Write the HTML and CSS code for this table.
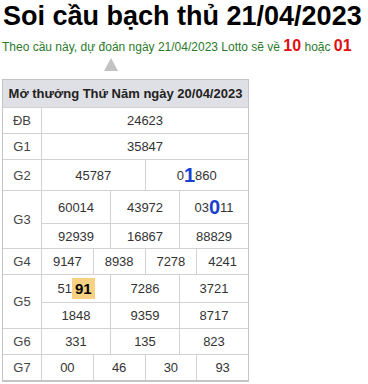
FILE: index.html
```html
<!DOCTYPE html>
<html lang="vi">
<head>
    <meta charset="UTF-8">
    <meta name="viewport" content="width=device-width, initial-scale=1.0">
    <title>Soi cầu bạch thủ 21/04/2023</title>
    <link rel="stylesheet" href="styles.css">
</head>
<body>
    <h1 class="title">Soi cầu bạch thủ 21/04/2023</h1>
    <p class="predict">Theo cầu này, dự đoán ngày 21/04/2023 Lotto sẽ về <b>10</b> hoặc <b>01</b></p>
    <div class="arrow"></div>

    <!-- Bảng kết quả -->
    <div class="result">
        <div class="head">Mở thưởng Thứ Năm ngày 20/04/2023</div>

        <div class="label">ĐB</div>
        <div class="c12">24623</div>

        <div class="label">G1</div>
        <div class="c12">35847</div>

        <div class="label">G2</div>
        <div class="c6">45787</div>
        <div class="c6">0<span class="hit">1</span>860</div>

        <div class="label r2">G3</div>
        <div class="c4">60014</div>
        <div class="c4">43972</div>
        <div class="c4">03<span class="hit">0</span>11</div>
        <div class="c4">92939</div>
        <div class="c4">16867</div>
        <div class="c4">88829</div>

        <div class="label">G4</div>
        <div class="c3">9147</div>
        <div class="c3">8938</div>
        <div class="c3">7278</div>
        <div class="c3">4241</div>

        <div class="label r2">G5</div>
        <div class="c4">51<span class="lotto">91</span></div>
        <div class="c4">7286</div>
        <div class="c4">3721</div>
        <div class="c4">1848</div>
        <div class="c4">9359</div>
        <div class="c4">8717</div>

        <div class="label">G6</div>
        <div class="c4">331</div>
        <div class="c4">135</div>
        <div class="c4">823</div>

        <div class="label">G7</div>
        <div class="c3">00</div>
        <div class="c3">46</div>
        <div class="c3">30</div>
        <div class="c3">93</div>
    </div>
</body>
</html>
```

FILE: styles.css
```css
/* General */
body {
    margin: 0;
    padding: 0 2px;
    font-family: 'Liberation Sans', Arial, sans-serif;
    color: #333;
    background: #fff;
}

.title {
    margin: 0;
    padding-left: 1px;
    font-size: 27px;
    line-height: 32px;
    font-weight: bold;
    white-space: nowrap;
    color: #000;
}

.predict {
    margin: 5px 0 0;
    font-size: 12px;
    line-height: 17px;
    white-space: nowrap;
    color: #2b7a2b;
}

.predict b {
    font-size: 16px;
    color: #e01010;
}

.arrow {
    width: 0;
    height: 0;
    margin: 2px 0 0 102px;
    border-left: 7px solid transparent;
    border-right: 7px solid transparent;
    border-bottom: 13px solid #c2c2c2;
}

/* Result table */
.result {
    display: grid;
    grid-template-columns: 38px repeat(12, 1fr);
    grid-template-rows: 27px 25px 25px 30px 32px 24px 25px 27px 25px 25px 25px;
    gap: 1px;
    width: 247px;
    box-sizing: border-box;
    margin-top: 8px;
    border: 1px solid #c4c4c4;
    border-bottom-width: 2px;
    background: #d2d2d2;
    font-size: 13px;
}

.result > div {
    display: flex;
    align-items: center;
    justify-content: center;
    background: #fff;
}

.result .head {
    grid-column: 1 / -1;
    background: #dfe0e5;
    font-weight: bold;
    color: #222;
}

.result .label {
    color: #444;
}

.result .r2 {
    grid-row: span 2;
}

.c12 { grid-column: span 12; }
.c6 { grid-column: span 6; }
.c4 { grid-column: span 4; }
.c3 { grid-column: span 3; }

.hit {
    font-size: 20px;
    font-weight: bold;
    color: #1a40d0;
}

.lotto {
    padding: 2px 3px;
    background: #f8d182;
    font-size: 15px;
    font-weight: bold;
    color: #000;
}
```
